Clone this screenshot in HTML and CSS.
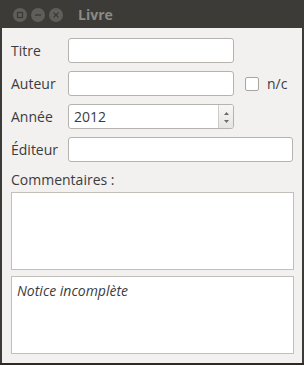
FILE: index.html
```html
<!DOCTYPE html>
<html lang="fr">

<head>
    <meta charset="UTF-8">
    <meta name="viewport" content="width=device-width, initial-scale=1.0">
    <title>Livre</title>
    <link rel="stylesheet" href="styles.css">
</head>

<body>

    <div class="window">
        <!-- Barre de titre -->
        <div class="titlebar">
            <div class="controls">
                <svg class="ctl" width="14" height="14" viewBox="0 0 14 14">
                    <circle cx="7" cy="7" r="7" fill="#5f5e5a"/>
                    <rect x="4.5" y="4.5" width="5" height="5" fill="none" stroke="#3a3935" stroke-width="1.2"/>
                </svg>
                <svg class="ctl" width="14" height="14" viewBox="0 0 14 14">
                    <circle cx="7" cy="7" r="7" fill="#5f5e5a"/>
                    <rect x="4" y="6.4" width="6" height="1.3" fill="#3a3935"/>
                </svg>
                <svg class="ctl" width="14" height="14" viewBox="0 0 14 14">
                    <circle cx="7" cy="7" r="7" fill="#5f5e5a"/>
                    <path d="M4.6 4.6 L9.4 9.4 M9.4 4.6 L4.6 9.4" stroke="#3a3935" stroke-width="1.3"/>
                </svg>
            </div>
            <span class="title">Livre</span>
        </div>

        <!-- Formulaire -->
        <form class="content">
            <div class="fields">
                <label for="titre">Titre</label>
                <div class="row">
                    <input type="text" id="titre" class="field short">
                </div>

                <label for="auteur">Auteur</label>
                <div class="row">
                    <input type="text" id="auteur" class="field short">
                    <span class="check"></span>
                    <span class="nc">n/c</span>
                </div>

                <label for="annee">Année</label>
                <div class="row">
                    <div class="spin">
                        <span class="spin-value">2012</span>
                        <span class="spin-buttons">
                            <svg width="5" height="3" viewBox="0 0 5 3"><path d="M0 3 L2.5 0 L5 3 Z" fill="#6b6b6b"/></svg>
                            <svg width="5" height="3" viewBox="0 0 5 3"><path d="M0 0 L2.5 3 L5 0 Z" fill="#6b6b6b"/></svg>
                        </span>
                    </div>
                </div>

                <label for="editeur">Éditeur</label>
                <div class="row">
                    <input type="text" id="editeur" class="field">
                </div>
            </div>

            <div class="comments-label">Commentaires :</div>
            <div class="box"></div>
            <div class="box notice">Notice incomplète</div>
        </form>
    </div>

</body>

</html>
```

FILE: styles.css
```css
/* Fenêtre façon Ubuntu */
body {
    margin: 0;
    background: #2e2923;
    font-family: "Open Sans", sans-serif;
    font-size: 14px;
    color: #3c3c3c;
}

.window {
    width: 300px;
    border-left: 2px solid #3c3b37;
    border-right: 2px solid #3c3b37;
}

.titlebar {
    height: 28px;
    background: #3c3b37;
    display: flex;
    align-items: center;
    padding-left: 13px;
    margin-left: -2px;
    margin-right: -2px;
    border-radius: 4px 4px 0 0;
}

.controls {
    display: flex;
    gap: 4px;
    margin-top: 2px;
}

.ctl {
    display: block;
}

.title {
    margin-left: 15px;
    margin-top: 1px;
    font-weight: bold;
    font-size: 14px;
    color: #8c8a85;
}

.content {
    background: #f2f1f0;
    padding: 10px 9px 9px 9px;
    margin: 0;
}

.fields {
    display: grid;
    grid-template-columns: 57px 1fr;
    grid-auto-rows: 25px;
    row-gap: 8px;
    align-items: center;
}

.fields label {
    padding-bottom: 1px;
}

.row {
    display: flex;
    align-items: center;
    height: 25px;
}

.field {
    box-sizing: border-box;
    width: 100%;
    height: 25px;
    border: 1px solid #b6b3ae;
    border-radius: 3px;
    background: #fff;
    padding: 0 6px;
    margin: 0;
    font: inherit;
}

.field.short {
    width: 166px;
    flex: none;
}

.check {
    box-sizing: border-box;
    width: 14px;
    height: 14px;
    border: 1px solid #a9a6a1;
    border-radius: 2px;
    background: #fff;
    margin-left: 11px;
    margin-top: 1px;
}

.nc {
    margin-left: 8px;
}

.spin {
    box-sizing: border-box;
    width: 166px;
    height: 25px;
    border: 1px solid #b6b3ae;
    border-radius: 3px;
    background: #fff;
    display: flex;
}

.spin-value {
    flex: 1;
    padding-left: 5px;
    line-height: 23px;
}

.spin-buttons {
    width: 14px;
    border-left: 1px solid #cfccc7;
    background: linear-gradient(#f7f7f6, #e6e4e1);
    border-radius: 0 2px 2px 0;
    display: flex;
    flex-direction: column;
    align-items: center;
    justify-content: space-between;
    padding: 7px 0 5px;
}

.spin-buttons svg {
    display: block;
}

.comments-label {
    margin-top: 8px;
    height: 22px;
}

.box {
    box-sizing: border-box;
    width: 283px;
    height: 78px;
    background: #fff;
    border: 1px solid #c2bfba;
}

.notice {
    margin-top: 6px;
    padding: 4px 5px;
    font-style: italic;
}
```
